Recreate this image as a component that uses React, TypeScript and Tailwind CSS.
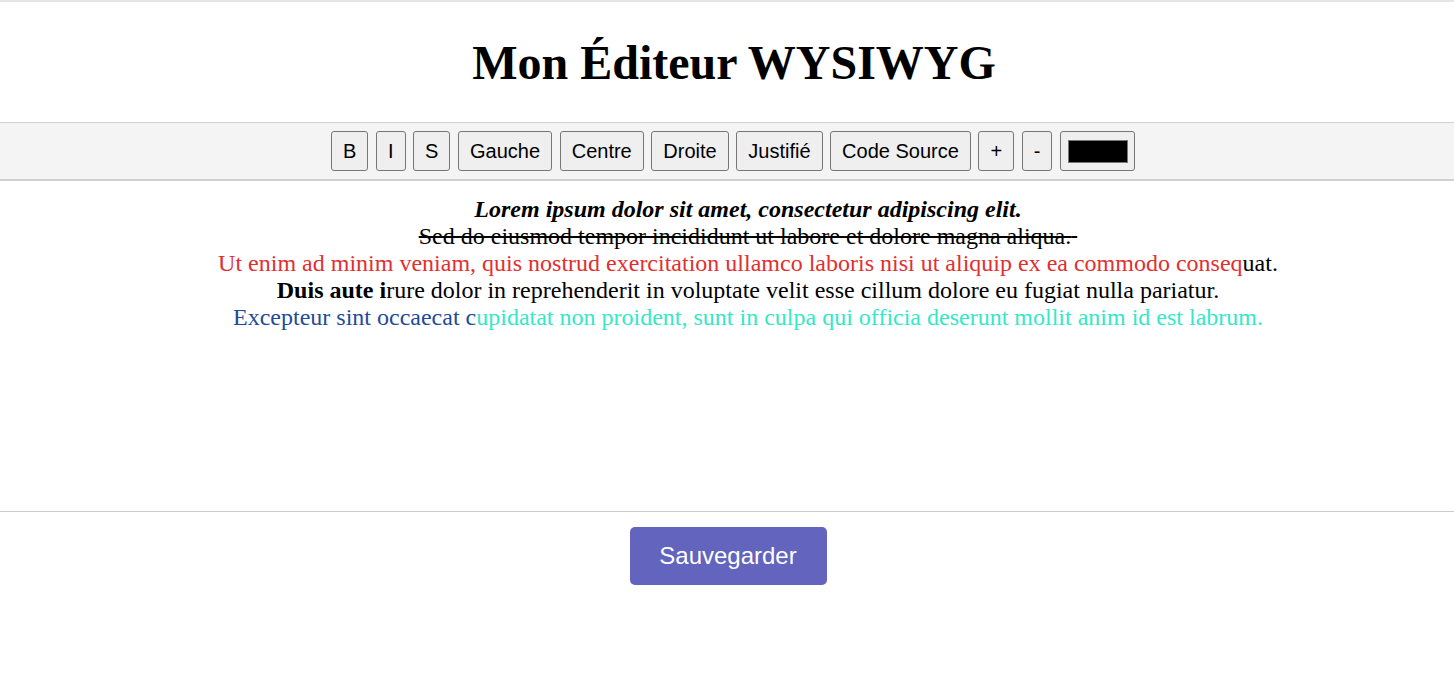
import React from 'react'

const tools = ['B', 'I', 'S', 'Gauche', 'Centre', 'Droite', 'Justifié', 'Code Source', '+', '-']

function ToolButton({ label }: { label: string }) {
    return (
        <button className="h-10 px-[11px] bg-[#efefef] border border-[#767676] rounded-[3px] text-[20px] text-black leading-none">
            {label}
        </button>
    )
}

export default function App() {
    return (
        <div className="min-h-screen bg-white border-t-2 border-[#e6e6e6] font-['Liberation_Sans',Arial,sans-serif]">
            <h1 className="text-center text-[48px] font-bold leading-[55px] pt-[33px] pb-[32px] pl-[14px] font-['Liberation_Serif','Times_New_Roman',serif]">
                Mon Éditeur WYSIWYG
            </h1>

            {/* Toolbar */}
            <div className="bg-[#f4f4f4] border-t border-b-2 border-[#d0d0d0] py-2 pl-[12px] flex justify-center gap-[7.6px]">
                {tools.map((t) => (
                    <ToolButton key={t} label={t} />
                ))}
                <button className="h-10 w-[75px] bg-[#efefef] border border-[#767676] rounded-[3px] flex items-center justify-center">
                    <span className="block w-[60px] h-[23px] bg-black border border-[#777]"></span>
                </button>
            </div>

            {/* Editor */}
            <div className="h-[331px] border-b border-[#cccccc] pt-[15px] pl-[42px] text-center text-[24px] leading-[27px] font-['Liberation_Serif','Times_New_Roman',serif] text-black">
                <div className="font-bold italic">Lorem ipsum dolor sit amet, consectetur adipiscing elit.</div>
                <div className="line-through decoration-black">Sed do eiusmod tempor incididunt ut labore et dolore magna aliqua.{'\u00a0'}</div>
                <div>
                    <span className="text-[#e22f2f]">Ut enim ad minim veniam, quis nostrud exercitation ullamco laboris nisi ut aliquip ex ea commodo conseq</span>uat.
                </div>
                <div>
                    <b>Duis aute i</b>rure dolor in reprehenderit in voluptate velit esse cillum dolore eu fugiat nulla pariatur.
                </div>
                <div>
                    <span className="text-[#1f4b99]">Excepteur sint occaecat c</span>
                    <span className="text-[#33e8c8]">upidatat non proident, sunt in culpa qui officia deserunt mollit anim id est labrum.</span>
                </div>
            </div>

            <div className="flex justify-center pt-[15px] pl-[2px]">
                <button className="w-[197px] h-[58px] bg-[#6264be] text-white text-[24px] rounded-[5px]">
                    Sauvegarder
                </button>
            </div>
        </div>
    )
}
